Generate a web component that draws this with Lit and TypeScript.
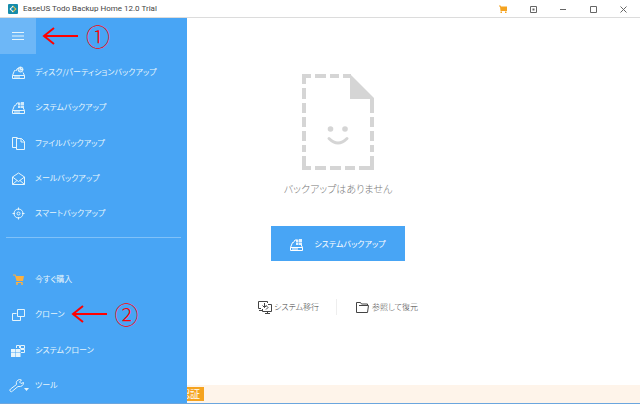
import { LitElement, html, css, svg } from "lit";
import { customElement } from "lit/decorators.js";

const drive = svg`<path d="M3.5 6.5H2.5L.5 11.5H12.5L11 8.5M.5 11.5V14.5H12.5V11.5M2 13H8"/>`;

const icons = {
  disk: svg`${drive}<path d="M4 7A3.5 3.5 0 0 1 7.500 4"/><circle cx="8.500" cy="5.500" r="2.500" fill="currentColor" fill-opacity=".5"/><path d="M8.500 5.500V3M8.500 5.500H11"/>`,
  system: svg`${drive}<path d="M3.500 6.500 5 4H6.500"/><path class="solid" d="M6 3.500H8.500V6H6zM9 3H12V6H9zM6 6.500H8.500V9H6zM9 6.500H12V9H9z" fill-opacity=".85"/>`,
  file: svg`<path d="M4 12.500H.5V2.500H5.500"/><path d="M4.500 3.500H9.500L12.500 6.500V14.500H4.500zM9 3.500V7H12.500"/>`,
  mail: svg`<path d="M.5 7 6.500 3 12.500 7V14.500H.5zM.5 7 6.500 11.500 12.500 7M.5 14.500 5 10.500M12.500 14.500 8 10.500"/>`,
  smart: svg`<circle cx="6.500" cy="8.500" r="4.500"/><circle cx="6.500" cy="8.500" r="1.500"/><path d="M6.500 2.500V5M6.500 12V14.500M.5 8.500H3M10 8.500H12.500"/>`,
  cart: svg`<path class="solid" d="M1 3.500H3.500L4.200 5H12L11 10H4.500L3 4.500H1z"/><path d="M4 11.500H10.500"/><circle class="solid" cx="5" cy="13" r="1"/><circle class="solid" cx="10" cy="13" r="1"/>`,
  clone: svg`<path d="M4.500 7.500H.5V14.500H8.500V10.500"/><path d="M5.500 3.500H12.500V10.500H5.500z"/>`,
  systemClone: svg`<path class="solid" d="M-1 7H3.500V10.500H-1zM4 7H8.500V10.500H4zM-1 11H3.500V15H-1zM4 11H8.500V15H4z"/><path d="M4.500 6V3.500H7.500V6M8.500 3.500H12.500V6.500H8.500zM9 10.500H12.500V7.500H9"/>`,
  tool: svg`<path d="M-1.500 14.500Q-3 13 -1.500 12L4.500 7.500Q3.500 3.500 7.500 2.500L9.500 3L7.500 5L9 6.500L11.500 5.500Q11.500 10 6 9.500L.5 14Q-.5 15.200 -1.500 14.500z"/>`,
  migrate: svg`<path d="M3 9.500H.5V2.500H9.500V4M1 11.500H4"/><path d="M10 5.500H13.500V12.500H4.500V10M7 14.500H12M9.500 12.500V14.500"/><path d="M6.500 4V8.500M4.500 6.500 6.500 8.500 8.500 6.500M8 10.500 10 8.500 8 6.500"/>`,
  folder: svg`<path d="M.5 13.500V3.500H4.500L5.500 5H11.500V6.500M.5 13.500H11.500L12.500 6.500H3"/>`,
};
type IconName = keyof typeof icons;

const icon = (name: IconName, tone = "") => html`
  <svg class="icon ${tone}" viewBox="0 0 14 16" aria-hidden="true">${icons[name]}</svg>`;

const callout = (mark: string) => html`
  <span class="callout">
    <svg class="arrow" viewBox="0 0 35 18" aria-hidden="true"><path d="M1 9H35M11 1 1 9 11 17"/></svg>
    <span class="mark">${mark}</span>
  </span>`;

const backups: { icon: IconName; label: string }[] = [
  { icon: "disk", label: "ディスク/パーティションバックアップ" },
  { icon: "system", label: "システムバックアップ" },
  { icon: "file", label: "ファイルバックアップ" },
  { icon: "mail", label: "メールバックアップ" },
  { icon: "smart", label: "スマートバックアップ" },
];

const extras: { icon: IconName; label: string; tone?: string; mark?: string; more?: boolean }[] = [
  { icon: "cart", label: "今すぐ購入", tone: "gold" },
  { icon: "clone", label: "クローン", mark: "②" },
  { icon: "systemClone", label: "システムクローン" },
  { icon: "tool", label: "ツール", more: true },
];

@customElement("app-root")
export class AppRoot extends LitElement {
  static styles = css`
    :host {
      display: flex;
      flex-direction: column;
      min-height: 100vh;
      box-sizing: border-box;
      border-bottom: 1px solid #6ba6de;
      background: #fff;
      color: #666;
      font-family: "Noto Sans CJK JP", sans-serif;
      font-size: 8px;
      font-weight: 300;
      font-feature-settings: "palt";
      line-height: 12px;
    }
    * { box-sizing: border-box; }
    button {
      margin: 0;
      padding: 0;
      border: 0;
      background: none;
      color: inherit;
      font: inherit;
      font-feature-settings: inherit;
      white-space: nowrap;
      cursor: pointer;
    }
    ul { margin: 0; padding: 0; list-style: none; }
    svg { display: block; flex: none; fill: none; stroke: currentColor; overflow: visible; }
    .icon { width: 14px; height: 16px; }
    .solid { fill: currentColor; stroke: none; }
    .gold { color: #fbb040; }

    .titlebar {
      display: flex;
      align-items: center;
      height: 18px;
      padding-left: 8px;
      border-bottom: 1px solid #dcdcdc;
    }
    .logo { width: 10px; height: 10px; stroke: none; }
    .title {
      flex: 1;
      margin: 0 0 0 5px;
      font-family: Roboto, sans-serif;
      font-size: 8px;
      font-weight: 400;
      color: #444;
    }
    .control { display: flex; justify-content: center; width: 30px; color: #666; }
    .control.cart { color: #f5a31f; }
    .control svg { width: 10px; height: 10px; }
    .controls { display: flex; padding-right: 2px; }

    .body { position: relative; flex: 1; display: flex; flex-direction: column; }

    .menu {
      position: absolute;
      inset: 0 auto 0 0;
      display: flex;
      flex-direction: column;
      width: 187px;
      background: #48a5f5;
      color: #e6f5fb;
      font-weight: 400;
    }
    .top { display: flex; align-items: center; height: 36px; }
    .toggle {
      display: flex;
      align-items: center;
      justify-content: center;
      width: 36px;
      height: 36px;
      background: #6db7f7;
    }
    .toggle svg { width: 12px; height: 8px; }
    .group { display: flex; flex-direction: column; }
    .five { flex: 5; }
    .four { flex: 4; }
    .row { flex: 1; display: flex; align-items: center; }
    .item { display: flex; align-items: center; padding-left: 12px; text-align: left; }
    .lead { display: flex; align-items: center; width: 23px; }
    .lead .caret { width: 5px; height: 3px; margin-top: 8px; }
    .divider { height: 30px; padding: 6px 6px; }
    .divider hr { margin: 0; border: 0; border-top: 1px solid #80c1f8; }
    .callout {
      display: flex;
      align-items: center;
      gap: 8px;
      margin-left: 7px;
      color: #f00;
    }
    .arrow { width: 35px; height: 18px; stroke-width: 2; }
    .mark { font-size: 24px; font-weight: 300; line-height: 24px; }

    .main {
      flex: 1;
      display: flex;
      flex-direction: column;
      align-items: center;
      padding: 56px 0 24px 36px;
    }
    .empty { width: 72px; height: 96px; color: #d5d5d5; }
    .message { margin: 9px 0 27px; font-size: 10px; line-height: 20px; color: #777; }
    .primary {
      display: flex;
      align-items: center;
      justify-content: center;
      gap: 10px;
      width: 134px;
      height: 35px;
      background: #48a5f5;
      color: #fff;
      font-weight: 400;
    }
    .links { display: flex; align-items: center; margin-top: 38px; color: #444; }
    .links button { display: flex; align-items: center; gap: 2px; }
    .links button + button { margin-left: 17px; padding-left: 19px; border-left: 1px solid #eee; }

    .footer {
      display: flex;
      align-items: center;
      height: 18px;
      padding-left: 180px;
      background: #fef4ea;
    }
    .activate { height: 14px; padding: 0 4px 0 0; background: #f5a31f; color: #fff; font-size: 10px; font-weight: 400; }
  `;

  render() {
    return html`
      <header class="titlebar">
        <svg class="logo" viewBox="0 0 10 10" aria-hidden="true">
          <rect width="10" height="10" rx="1" fill="#168cab"/>
          <path d="M5 1.500 1.500 5 5 8.500V6.800A1.800 1.800 0 0 1 5 3.200z" fill="#fff"/>
          <path d="M5 1.500 8.500 5 5 8.500V6.800A1.800 1.800 0 0 0 5 3.200z" fill="#f3c64b"/>
        </svg>
        <h1 class="title">EaseUS Todo Backup Home 12.0 Trial</h1>
        <div class="controls">
          <button class="control cart" aria-label="購入">
            <svg viewBox="0 0 10 10"><path class="solid" d="M1 1.500H2.500L3 2.500H9V7H2.500L2 2.500H1z"/><path class="solid" d="M2.500 7.500H4V9H2.500zM7 7.500H8.500V9H7z"/></svg>
          </button>
          <button class="control" aria-label="メニュー">
            <svg viewBox="0 0 10 10"><path d="M2.500 2.500H8.500V8.500H2.500z"/><path class="solid" d="M4.500 4.500H6.500V6.500H4.500z"/></svg>
          </button>
          <button class="control" aria-label="最小化"><svg viewBox="0 0 10 10"><path d="M2 5.500H8"/></svg></button>
          <button class="control" aria-label="最大化"><svg viewBox="0 0 10 10"><path d="M2.500 2.500H8.500V8.500H2.500z"/></svg></button>
          <button class="control" aria-label="閉じる"><svg viewBox="0 0 10 10"><path d="M2.500 2.500 8.500 8.500M8.500 2.500 2.500 8.500"/></svg></button>
        </div>
      </header>
      <div class="body">
        <main class="main">
          <svg class="empty" viewBox="0 0 72 96" aria-hidden="true">
            <path stroke-width="4" d="M0 2H9M13 2H24M28 2H37M41 2H49M2 0V10M2 14V25M2 29V39M2 43V53M2 57V67M2 71V78M2 82V96M0 94H9M13 94H24M28 94H39M43 94H53M57 94H72M70 24V39M70 43V53M70 57V67M70 71V78M70 82V96"/>
            <path class="solid" d="M48 0 72 24V25H48z"/>
            <circle class="solid" cx="28.500" cy="55" r="2.800"/>
            <circle class="solid" cx="43" cy="55" r="2.800"/>
            <path stroke-width="3" stroke-linecap="round" d="M27 64.500Q36 73.500 45 64.500"/>
          </svg>
          <p class="message">バックアップはありません</p>
          <button class="primary">${icon("system")}<span>システムバックアップ</span></button>
          <div class="links">
            <button>${icon("migrate")}<span>システム移行</span></button>
            <button>${icon("folder")}<span>参照して復元</span></button>
          </div>
        </main>
        <footer class="footer"><button class="activate">認証</button></footer>
        <nav class="menu">
          <div class="top">
            <button class="toggle" aria-label="メニューを閉じる">
              <svg viewBox="0 0 12 8"><path d="M0 .5H12M0 4H12M0 7.500H12"/></svg>
            </button>
            ${callout("①")}
          </div>
          <ul class="group five">
            ${backups.map((b) => html`<li class="row"><button class="item"><span class="lead">${icon(b.icon)}</span><span>${b.label}</span></button></li>`)}
          </ul>
          <div class="divider"><hr /></div>
          <ul class="group four">
            ${extras.map((e) => html`<li class="row">
              <button class="item"><span class="lead">${icon(e.icon, e.tone)}${e.more
                ? html`<svg class="caret" viewBox="0 0 5 3"><path class="solid" d="M-2 0H3L.5 3z"/></svg>` : ""}</span><span>${e.label}</span></button>
              ${e.mark ? callout(e.mark) : ""}
            </li>`)}
          </ul>
        </nav>
      </div>
    `;
  }
}
